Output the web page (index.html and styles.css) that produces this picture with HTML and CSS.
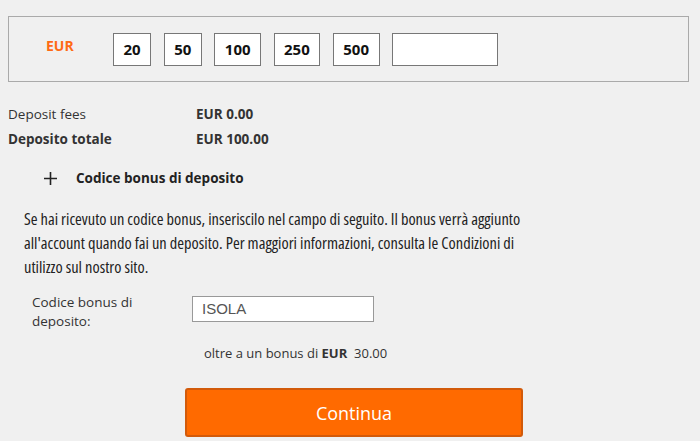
FILE: index.html
```html
<!DOCTYPE html>
<html>
<head>
<meta charset="utf-8">
<link rel="stylesheet" href="styles.css">
</head>
<body>
<div class="page">
  <div class="amounts">
    <span class="currency">EUR</span>
    <div class="chips">
      <span class="chip">20</span>
      <span class="chip">50</span>
      <span class="chip">100</span>
      <span class="chip">250</span>
      <span class="chip">500</span>
      <span class="chip custom"></span>
    </div>
  </div>
  <div class="summary">
    <div class="row"><span class="key">Deposit fees</span><span class="val">EUR 0.00</span></div>
    <div class="row total"><span class="key">Deposito totale</span><span class="val">EUR 100.00</span></div>
  </div>
  <div class="toggle">
    <svg class="plus" width="13" height="13" viewBox="0 0 13 13"><path d="M6.5 0v13M0 6.5h13" stroke="#222" stroke-width="1.6"/></svg>
    <span>Codice bonus di deposito</span>
  </div>
  <p class="info">Se hai ricevuto un codice bonus, inseriscilo nel campo di seguito. Il bonus verrà aggiunto all'account quando fai un deposito. Per maggiori informazioni, consulta le Condizioni di utilizzo sul nostro sito.</p>
  <div class="code-row">
    <label class="code-label">Codice bonus di deposito:</label>
    <div class="code-input">ISOLA</div>
  </div>
  <div class="bonus">oltre a un bonus di <b>EUR</b>&nbsp; 30.00</div>
  <div class="actions">
    <button class="continue">Continua</button>
  </div>
</div>
</body>
</html>
```

FILE: styles.css
```css
html, body {
  margin: 0;
  padding: 0;
  background: #f0f0f0;
  font-family: "Open Sans", "Liberation Sans", sans-serif;
  color: #333;
}
.page {
  padding: 16px 11px 0 8px;
}
.amounts {
  border: 1px solid #aaa;
  display: flex;
  align-items: center;
  box-sizing: border-box;
  height: 66px;
}
.currency {
  color: #ff6a14;
  font-weight: 700;
  font-size: 14px;
  margin-left: 37px;
  width: 67px;
  margin-top: -8px;
}
.chips {
  display: flex;
  gap: 12.5px;
}
.chip {
  box-sizing: border-box;
  height: 33px;
  min-width: 38px;
  padding: 0 9.5px;
  border: 1.5px solid #777;
  background: #fff;
  font-weight: 700;
  font-size: 15px;
  color: #111;
  display: flex;
  align-items: center;
  justify-content: center;
}
.chip.custom {
  width: 106px;
}
.summary {
  margin-top: 19px;
  font-size: 13.5px;
}
.row {
  display: flex;
  height: 25px;
  align-items: center;
}
.key {
  width: 188px;
}
.val, .total .key {
  font-weight: 700;
}
.toggle {
  display: flex;
  align-items: center;
  margin: 18px 0 0 36px;
  font-weight: 700;
  font-size: 13.5px;
  color: #222;
}
.plus {
  margin-right: 19px;
}
.info {
  margin: 20px 0 0 16px;
  width: 525px;
  font-size: 16.4px;
  line-height: 24px;
  color: #222;
  font-stretch: 87.5%;
}
.code-row {
  display: flex;
  align-items: flex-start;
  margin-top: 14px;
}
.code-label {
  width: 160px;
  margin-left: 24px;
  font-size: 13.5px;
  line-height: 19px;
  color: #333;
}
.code-input {
  box-sizing: border-box;
  width: 182px;
  height: 26px;
  margin-top: 3px;
  border: 1px solid #999;
  background: #fff;
  font-family: "Liberation Sans", Arial, sans-serif;
  font-size: 15px;
  color: #555;
  padding: 3px 0 0 9px;
}
.bonus {
  margin: 13px 0 0 196px;
  font-size: 13px;
  color: #333;
}
.actions {
  display: flex;
  margin-top: 26px;
  padding-left: 177px;
}
.continue {
  width: 338px;
  height: 49px;
  background: #ff6a00;
  border: 2px solid #d25a0a;
  border-radius: 3px;
  color: #fff;
  font-family: "Open Sans", sans-serif;
  font-size: 18px;
  padding: 0;
}
```
